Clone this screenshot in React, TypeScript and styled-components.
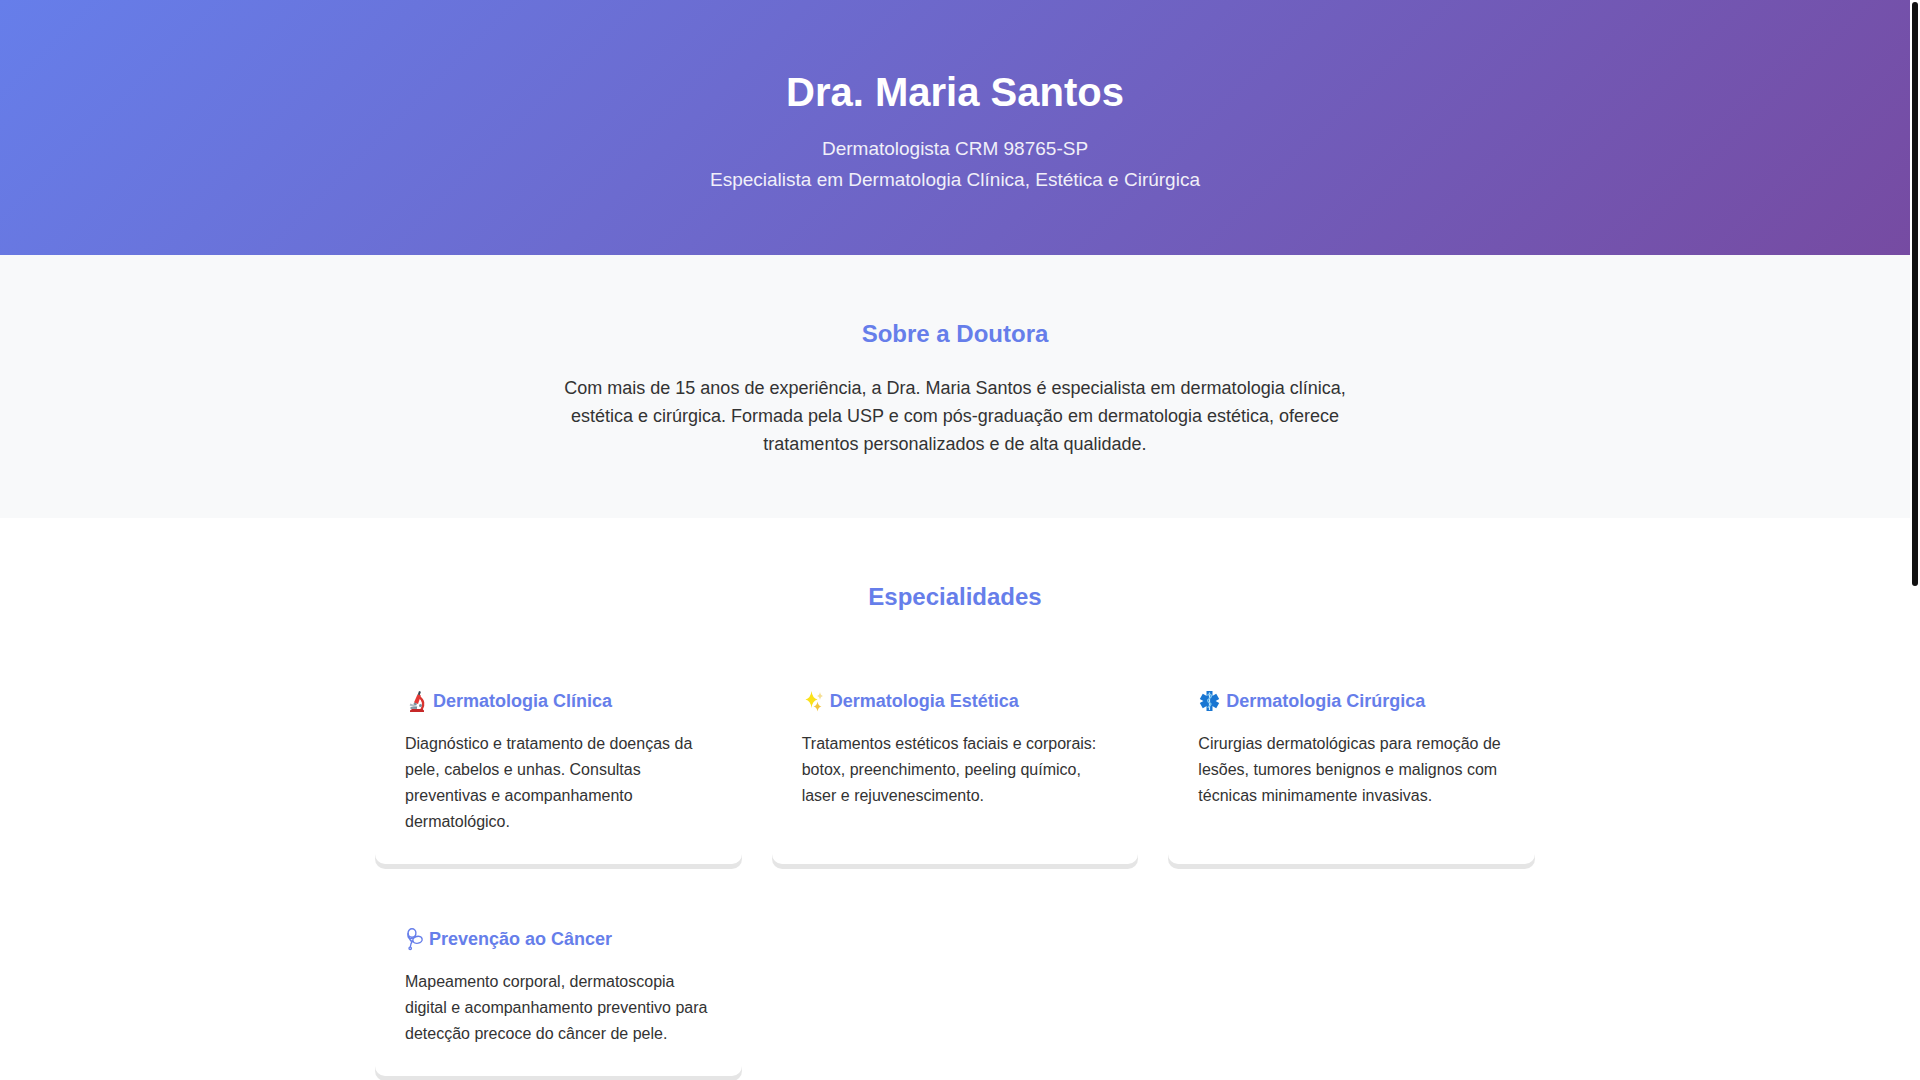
import React from "react";
import styled, { createGlobalStyle } from "styled-components";

const GlobalStyle = createGlobalStyle`
  * { box-sizing: border-box; margin: 0; padding: 0; }
  body {
    font-family: "Liberation Sans", Arial, sans-serif;
    font-size: 16px;
    line-height: 26px;
    color: #333;
    background: #fff;
  }
`;

const Shell = styled.div`
  display: flex;
  height: 100vh;
  overflow: hidden;
`;

const Page = styled.div`
  flex: 1;
  min-width: 0;
  overflow: hidden;
`;

const ScrollTrack = styled.div`
  flex: none;
  width: 10px;
  padding: 2px;
  background: #fff;
`;

const ScrollThumb = styled.div`
  width: 6px;
  height: 54.3%;
  border-radius: 3px;
  background: #111;
`;

const Hero = styled.header`
  padding: 60px 20px;
  text-align: center;
  color: #fff;
  background: linear-gradient(135deg, #667eea 0%, #764ba2 100%);
`;

const HeroTitle = styled.h1`
  margin-bottom: 9px;
  font-size: 40px;
  line-height: 64px;
`;

const HeroText = styled.p`
  font-size: 19px;
  line-height: 31px;
  opacity: 0.9;
`;

const Section = styled.section<{ $tinted?: boolean }>`
  padding: 60px 20px;
  background: ${({ $tinted }) => ($tinted ? "#f8f9fa" : "#fff")};
`;

const SectionTitle = styled.h2<{ $gap: number }>`
  margin-bottom: ${({ $gap }) => $gap}px;
  font-size: 24px;
  line-height: 38px;
  text-align: center;
  color: #667eea;
`;

const AboutText = styled.p`
  max-width: 800px;
  margin: 0 auto;
  font-size: 18px;
  line-height: 28px;
  text-align: center;
`;

const CardGrid = styled.div`
  display: grid;
  grid-template-columns: repeat(auto-fit, minmax(300px, 1fr));
  gap: 30px;
  max-width: 1160px;
  margin: 0 auto;
`;

const Card = styled.article`
  padding: 30px 30px 29px;
  border-radius: 10px;
  background: #fff;
  box-shadow: 0 5px 0 rgba(0, 0, 0, 0.1);
`;

const CardTitle = styled.h3`
  display: flex;
  align-items: center;
  gap: 5px;
  margin-bottom: 15px;
  font-size: 18px;
  line-height: 30px;
  color: #667eea;
`;

const Icon = styled.svg`
  flex: none;
  height: 24px;
`;

const Microscope = () => (
  <Icon width="23" viewBox="0 0 23 24" aria-hidden="true">
    <path d="M14 8c4.500 2.500 5.500 8 2.500 12.500" fill="none" stroke="#d8342f" strokeWidth="2.400" />
    <path d="M5 23v-1.600l2-1.400h10.500l1.500 1.400V23z" fill="#c62828" />
    <path d="M12.600 5.200l3.400 1.300-3 8.500-4-1.600z" fill="#e53935" />
    <path d="M14 2l1.900.7-1.200 3.600-1.900-.7z" fill="#37474f" />
    <path d="M9 13.400l3 1.200-.8 2-2.800-1.100z" fill="#78909c" />
    <path d="M5 15.500l7 2.800" stroke="#b0bec5" strokeWidth="2" />
    <path d="M5.500 19h6.500" stroke="#607d8b" strokeWidth="1.500" />
    <circle cx="15.500" cy="16.500" r="1.500" fill="#78909c" />
  </Icon>
);

const Sparkles = () => (
  <Icon width="23" viewBox="0 0 23 24" aria-hidden="true">
    <path d="M9.500 2q.9 7.400 6 8.500-5.100 1.100-6 8.500-.9-7.400-6-8.500 5.100-1.100 6-8.500z" fill="#fbe11a" />
    <path d="M15.500 12.500q.7 4.300 4 5-3.300.7-4 5-.7-4.300-4-5 3.300-.7 4-5z" fill="#f2c53d" />
    <path d="M18 3q.5 3.500 3 4-2.500.5-3 4-.5-3.500-3-4 2.500-.5 3-4z" fill="#f5df94" />
  </Icon>
);

const StarOfLife = () => (
  <Icon width="23" viewBox="0 0 23 24" aria-hidden="true">
    <g stroke="#1976d2" strokeWidth="6">
      <path d="M11.500 2v20" />
      <path d="M3.300 7.300l16.400 9.400" />
      <path d="M3.300 16.700l16.400-9.400" />
    </g>
    <path d="M11.500 3.500v17.500" stroke="#cfe8fa" strokeWidth="1.200" />
    <path d="M9.500 6.500c2-2.500 5-.5 3.500 1.500s-4.500 2.500-3 4.500 4 1.500 2.500 3.500-2.500 1.500-2.500 3" fill="none" stroke="#81c7f0" strokeWidth="1.300" />
  </Icon>
);

const Stethoscope = () => (
  <Icon width="19" viewBox="0 0 19 24" aria-hidden="true">
    <g fill="none" stroke="currentColor" strokeWidth="1.400">
      <ellipse cx="7" cy="6" rx="3.900" ry="4.200" />
      <path d="M3.100 6c-.8 3.500.2 5.500 2.900 5.500 2.500 0 4.500-1.500 4.800-4" />
      <path d="M3.500 9c.8 3 2 4.800 3.500 5.600" />
      <ellipse cx="12.500" cy="12.800" rx="4.700" ry="3.400" transform="rotate(-12 12.500 12.800)" />
      <path d="M7.800 13.500c-1.600 2-2.300 4-2.500 6.500" />
      <circle cx="5.200" cy="21.300" r="1.200" />
    </g>
  </Icon>
);

const specialties = [
  {
    icon: <Microscope />,
    title: "Dermatologia Clínica",
    text: "Diagnóstico e tratamento de doenças da pele, cabelos e unhas. Consultas preventivas e acompanhamento dermatológico.",
  },
  {
    icon: <Sparkles />,
    title: "Dermatologia Estética",
    text: "Tratamentos estéticos faciais e corporais: botox, preenchimento, peeling químico, laser e rejuvenescimento.",
  },
  {
    icon: <StarOfLife />,
    title: "Dermatologia Cirúrgica",
    text: "Cirurgias dermatológicas para remoção de lesões, tumores benignos e malignos com técnicas minimamente invasivas.",
  },
  {
    icon: <Stethoscope />,
    title: "Prevenção ao Câncer",
    text: "Mapeamento corporal, dermatoscopia digital e acompanhamento preventivo para detecção precoce do câncer de pele.",
  },
];

export default function App() {
  return (
    <Shell>
      <GlobalStyle />
      <Page>
        <Hero>
          <HeroTitle>Dra. Maria Santos</HeroTitle>
          <HeroText>Dermatologista CRM 98765-SP</HeroText>
          <HeroText>Especialista em Dermatologia Clínica, Estética e Cirúrgica</HeroText>
        </Hero>
        <main>
          <Section $tinted>
            <SectionTitle $gap={21}>Sobre a Doutora</SectionTitle>
            <AboutText>
              Com mais de 15 anos de experiência, a Dra. Maria Santos é especialista em dermatologia
              clínica, estética e cirúrgica. Formada pela USP e com pós-graduação em dermatologia
              estética, oferece tratamentos personalizados e de alta qualidade.
            </AboutText>
          </Section>
          <Section>
            <SectionTitle $gap={40}>Especialidades</SectionTitle>
            <CardGrid>
              {specialties.map(({ icon, title, text }) => (
                <Card key={title}>
                  <CardTitle>
                    {icon}
                    {title}
                  </CardTitle>
                  <p>{text}</p>
                </Card>
              ))}
            </CardGrid>
          </Section>
        </main>
      </Page>
      <ScrollTrack aria-hidden="true">
        <ScrollThumb />
      </ScrollTrack>
    </Shell>
  );
}
